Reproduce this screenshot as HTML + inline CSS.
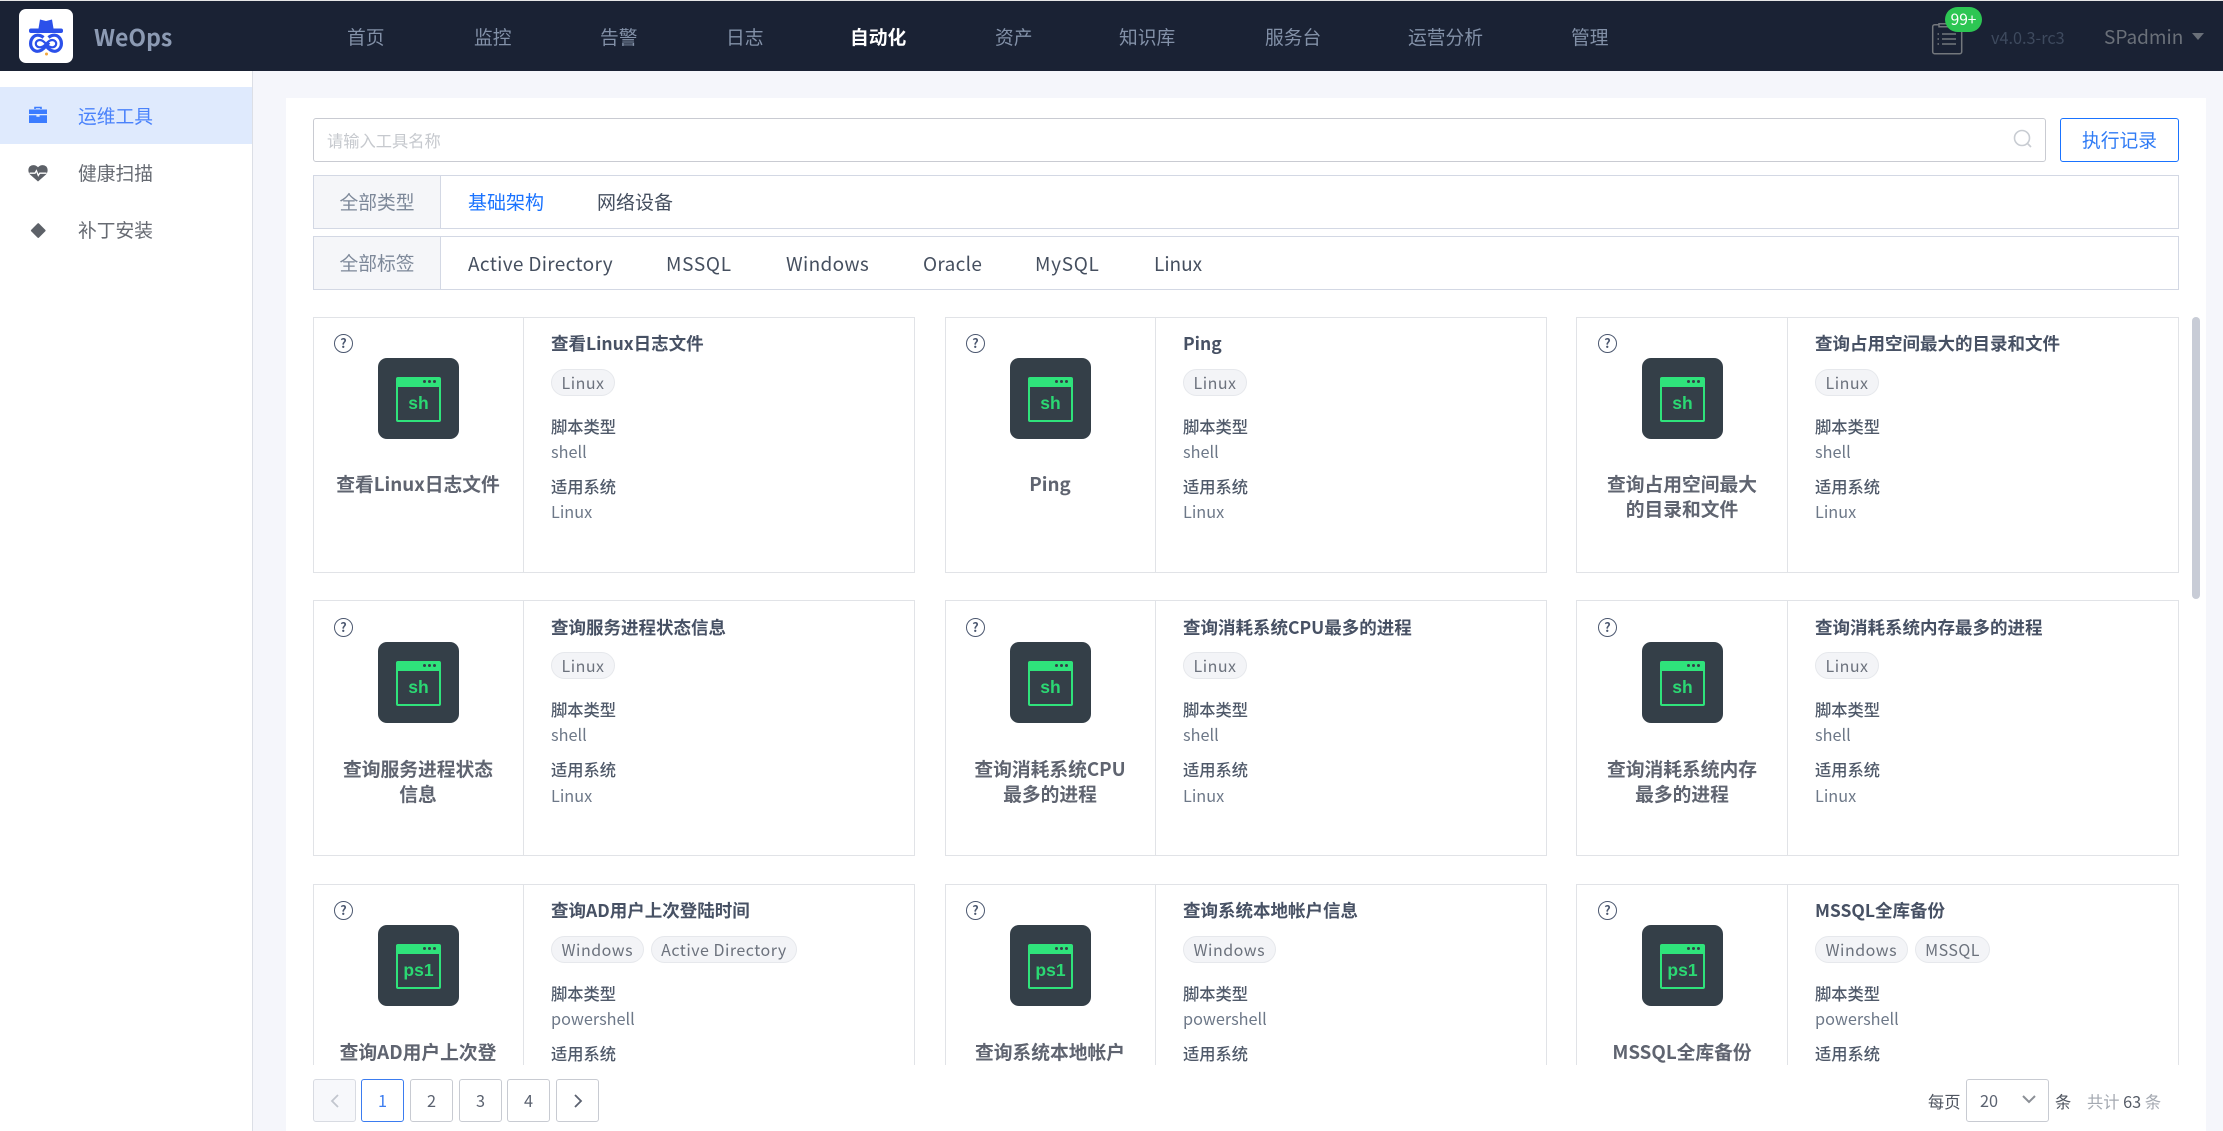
<!DOCTYPE html>
<html lang="zh"><head><meta charset="utf-8"><title>WeOps</title>
<style>
*{box-sizing:border-box;margin:0;padding:0}
html,body{width:2223px;height:1131px;overflow:hidden;background:#f5f6fb;font-family:"Noto Sans CJK SC","Liberation Sans",sans-serif}
.a{position:absolute;white-space:nowrap}
#top{position:absolute;left:0;top:0;width:2223px;height:71px;background:#1a2234;border-top:1px solid #e6e6e6}
.n{position:absolute;top:24px;line-height:24px;font-size:18.75px;color:#8391a8;white-space:nowrap}
#side{position:absolute;left:0;top:71px;width:253px;height:1060px;background:#fff;border-right:1px solid #dcdfe6}
#panel{position:absolute;left:286px;top:98px;width:1920px;height:1033px;background:#fff}
.row{position:absolute;left:313px;width:1866px;height:54px;border:1px solid #d3d8e4;background:#fff}
.lab{position:absolute;left:0;top:0;width:127px;height:52px;background:#f5f6f9;border-right:1px solid #d3d8e4;text-align:center;line-height:52px;font-size:18.75px;color:#7d8899}
.rt{position:absolute;line-height:24px;font-size:19px;color:#454f5f;white-space:nowrap}
.rl{letter-spacing:.33px}
.ru{letter-spacing:.7px}
#list{position:absolute;left:0;top:300px;width:2223px;height:765px;overflow:hidden}
.c{position:absolute;width:602px;height:256px;border:1px solid #e1e3e7;background:#fff}
.c3{width:603px}
.c3>*{transform:translateX(1px)}
.c .d{position:absolute;left:209px;top:0;width:1px;height:254px;background:#e1e3e7}
.c .q{position:absolute;left:20px;top:16px;width:19px;height:19px;border:1.5px solid #4c5870;border-radius:50%;font-size:12.5px;font-weight:700;line-height:16px;text-align:center;color:#4c5870}
.c .i{position:absolute;left:64px;top:40px;width:81px;height:81px;background:#343f48;border-radius:9px}
.c .w{position:absolute;left:18px;top:19px;width:45px;height:45px;border:2px solid #2fe37b;border-radius:2px;border-top-width:10px;text-align:center;font:700 17.5px/33px "Liberation Sans",sans-serif;color:#2bd873}
.c .w:before{content:"";position:absolute;right:3px;top:-7px;width:3px;height:3px;border-radius:50%;background:#343f48;box-shadow:-5px 0 #343f48,-10px 0 #343f48}
.c .l{position:absolute;left:-1px;top:154px;width:210px;text-align:center;font-size:18.75px;font-weight:700;line-height:25px;color:#5f6470}
.c .t{position:absolute;left:237px;top:14px;line-height:24px;font-size:17.5px;font-weight:700;color:#475164;white-space:nowrap}
.c .p{position:absolute;left:237px;top:51px;display:flex;gap:7px}
.c .p span{display:block;height:27px;line-height:24.5px;padding:0 9.5px;border:1px solid #e6e8ec;border-radius:14px;background:#f3f4f7;color:#6c727d;font-size:16px;letter-spacing:.5px;white-space:nowrap}
.c .k{position:absolute;left:237px;line-height:24px;font-size:16.25px;color:#4f5969;font-weight:500;white-space:nowrap}
.c .v{position:absolute;left:237px;line-height:24px;font-size:16.25px;color:#6d7888;white-space:nowrap}
.k1{top:96px}.v1{top:121px}.k2{top:155.5px}.v2{top:181px}
.r1 .l{margin-top:-1px}
.r2 .q,.r2 .i,.r2 .l,.r2 .t,.r2 .v2{margin-top:1px}
.b{position:absolute;top:1079px;width:43px;height:43px;border:1px solid #c8cbd2;border-radius:3px;background:#fff;text-align:center;line-height:40px;font-size:16.25px;color:#5b6270}
</style></head><body>
<div id="top">
<div class="a" style="left:19px;top:8px;width:54px;height:54px;background:#fff;border-radius:7px">
<svg width="54" height="54" viewBox="0 0 54 54"><path d="M19.5 19.5 21 10.5 27 12 33 10.500 34.500 19.500Z" fill="#2b50ea"/><rect x="10" y="19.500" width="34" height="4.500" rx="2" fill="#2b50ea"/><g fill="none" stroke="#2b50ea"><path stroke-width="3.200" d="M24.500 28.500C22.800 27 20.700 26.200 18.500 26.200 14.800 26.200 11.600 30 11.600 34.500 11.600 39 14.800 42.300 18.500 42.300 22 42.300 24.500 40 27 37L30 33.500M29.500 28.500C31.200 27 33.300 26.200 35.500 26.200 39.200 26.200 42.400 30 42.400 34.500 42.400 39 39.200 42.300 35.500 42.300 32 42.300 29.500 40 27 37"/><path stroke-width="2.200" d="M27 35C25 32.500 23 31 20.800 31 18.500 31 16.800 32.700 16.800 34.700 16.800 36.700 18.500 38.300 20.800 38.300 23 38.300 25 37 27 35 29 32.500 31 31 33.200 31 35.500 31 37.200 32.700 37.200 34.700 37.200 36.700 35.500 38.300 33.200 38.300 31 38.300 29 37 27 35"/></g><circle cx="27.500" cy="45" r="1.500" fill="#f2a63c"/></svg></div>
<div class="a" style="left:94px;top:19px;line-height:32px;font-size:23px;font-weight:700;color:#8c9ab3">WeOps</div>
<div class="n" style="left:347px">首页</div><div class="n" style="left:474px">监控</div><div class="n" style="left:600px">告警</div><div class="n" style="left:726px">日志</div>
<div class="n" style="left:850px;color:#fff;font-weight:700">自动化</div>
<div class="n" style="left:995px">资产</div><div class="n" style="left:1119px">知识库</div><div class="n" style="left:1265px">服务台</div><div class="n" style="left:1408px">运营分析</div><div class="n" style="left:1571px">管理</div>
<svg class="a" style="left:1930px;top:20px" width="36" height="36" viewBox="0 0 36 36" fill="none" stroke="#73777c" stroke-width="1.500"><rect x="2.700" y="3.700" width="29" height="29" rx="2"/><path d="M9 2.700h14v3H9z" fill="#1a2234"/><path d="M12 13h14M12 18h14M12 23h14"/><path d="M7.500 13h1.500M7.500 18h1.500M7.500 23h1.500"/></svg>
<div class="a" style="left:1945px;top:6px;width:37px;height:25px;border-radius:12.500px;background:#2dc653;color:#fff;text-align:center;font-size:15.500px;line-height:24px">99+</div>
<div class="a" style="left:1991px;top:24px;line-height:24px;font-size:16.250px;color:#3e4a5e">v4.0.3-rc3</div>
<div class="a" style="left:2104px;top:24px;line-height:24px;font-size:19px;color:#6a7079">SPadmin</div>
<div class="a" style="left:2192px;top:32px;width:0;height:0;border-left:6px solid transparent;border-right:6px solid transparent;border-top:7px solid #6a7079"></div>
</div>
<div id="side">
<div class="a" style="left:0;top:16px;width:252px;height:57px;background:#dfeafd"></div>
<svg class="a" style="left:29px;top:35px" width="18" height="18" viewBox="0 0 18 18"><path d="M6 3V1.500h6V3" fill="none" stroke="#3b7cff" stroke-width="1.600"/><path d="M0 3.500h18V8H0zM0 9.200h7.400v1.500h3.200V9.200H18V17H0z" fill="#3b7cff"/></svg>
<div class="a" style="left:78px;top:33px;line-height:24px;font-size:18.750px;color:#4a82fb">运维工具</div>
<svg class="a" style="left:28px;top:92px" width="20" height="20" viewBox="0 0 20 20"><path d="M10 18.500 2 11.500C-.2 9-.1 5.200 2 3.300 4.300 1.400 7.800 1.700 10 4.300 12.200 1.700 15.700 1.400 18 3.300 20.100 5.200 20.200 9 18 11.500Z" fill="#5d6168"/><path d="M1.500 10.200H7l1.400-2.500 1.900 4.800 1.500-2.300H18.500" fill="none" stroke="#fff" stroke-width="1.300"/></svg>
<div class="a" style="left:78px;top:90px;line-height:24px;font-size:18.750px;color:#666a72">健康扫描</div>
<div class="a" style="left:33px;top:154px;width:10.500px;height:10.500px;background:#5d6168;transform:rotate(45deg);border-radius:1px"></div>
<div class="a" style="left:78px;top:147px;line-height:24px;font-size:18.750px;color:#666a72">补丁安装</div>
</div>
<div id="panel"></div>
<div class="a" style="left:313px;top:118px;width:1733px;height:44px;border:1px solid #c9cbd2;border-radius:3px;background:#fff"></div>
<div class="a" style="left:327px;top:128px;line-height:24px;font-size:16.250px;color:#c6c9ce">请输入工具名称</div>
<svg class="a" style="left:2012px;top:128px" width="22" height="22" viewBox="0 0 22 22" fill="none" stroke="#c8ccd2" stroke-width="1.600"><circle cx="10" cy="10" r="7.500"/><path d="M15.500 15.500 19 19"/></svg>
<div class="a" style="left:2060px;top:118px;width:119px;height:44px;border:1px solid #1a73ff;border-radius:3px;background:#fff;text-align:center;line-height:42px;font-size:18.750px;color:#2f7bf5">执行记录</div>
<div class="row" style="top:175px"><div class="lab">全部类型</div></div>
<div class="row" style="top:236px"><div class="lab">全部标签</div></div>
<div class="rt" style="left:468px;top:190px;color:#1a73ff">基础架构</div>
<div class="rt" style="left:597px;top:190px">网络设备</div>
<div class="rt rl" style="left:468px;top:252px">Active Directory</div>
<div class="rt ru" style="left:666px;top:252px">MSSQL</div>
<div class="rt rl" style="left:786px;top:252px">Windows</div>
<div class="rt rl" style="left:923px;top:252px">Oracle</div>
<div class="rt ru" style="left:1035px;top:252px">MySQL</div>
<div class="rt" style="left:1154px;top:252px">Linux</div>
<div id="list">
<div class="c r1" style="left:313px;top:17px"><div class="d"></div><div class="q">?</div><div class="i"><div class="w">sh</div></div><div class="l">查看Linux日志文件</div><div class="t">查看Linux日志文件</div><div class="p"><span>Linux</span></div><div class="k k1">脚本类型</div><div class="v v1">shell</div><div class="k k2">适用系统</div><div class="v v2">Linux</div></div>
<div class="c r1" style="left:945px;top:17px"><div class="d"></div><div class="q">?</div><div class="i"><div class="w">sh</div></div><div class="l">Ping</div><div class="t">Ping</div><div class="p"><span>Linux</span></div><div class="k k1">脚本类型</div><div class="v v1">shell</div><div class="k k2">适用系统</div><div class="v v2">Linux</div></div>
<div class="c c3 r1" style="left:1576px;top:17px"><div class="d"></div><div class="q">?</div><div class="i"><div class="w">sh</div></div><div class="l">查询占用空间最大<br>的目录和文件</div><div class="t">查询占用空间最大的目录和文件</div><div class="p"><span>Linux</span></div><div class="k k1">脚本类型</div><div class="v v1">shell</div><div class="k k2">适用系统</div><div class="v v2">Linux</div></div>
<div class="c r2" style="left:313px;top:300px"><div class="d"></div><div class="q">?</div><div class="i"><div class="w">sh</div></div><div class="l">查询服务进程状态<br>信息</div><div class="t">查询服务进程状态信息</div><div class="p"><span>Linux</span></div><div class="k k1">脚本类型</div><div class="v v1">shell</div><div class="k k2">适用系统</div><div class="v v2">Linux</div></div>
<div class="c r2" style="left:945px;top:300px"><div class="d"></div><div class="q">?</div><div class="i"><div class="w">sh</div></div><div class="l">查询消耗系统CPU<br>最多的进程</div><div class="t">查询消耗系统CPU最多的进程</div><div class="p"><span>Linux</span></div><div class="k k1">脚本类型</div><div class="v v1">shell</div><div class="k k2">适用系统</div><div class="v v2">Linux</div></div>
<div class="c c3 r2" style="left:1576px;top:300px"><div class="d"></div><div class="q">?</div><div class="i"><div class="w">sh</div></div><div class="l">查询消耗系统内存<br>最多的进程</div><div class="t">查询消耗系统内存最多的进程</div><div class="p"><span>Linux</span></div><div class="k k1">脚本类型</div><div class="v v1">shell</div><div class="k k2">适用系统</div><div class="v v2">Linux</div></div>
<div class="c" style="left:313px;top:584px"><div class="d"></div><div class="q">?</div><div class="i"><div class="w">ps1</div></div><div class="l">查询AD用户上次登</div><div class="t">查询AD用户上次登陆时间</div><div class="p"><span>Windows</span><span>Active Directory</span></div><div class="k k1">脚本类型</div><div class="v v1">powershell</div><div class="k k2">适用系统</div><div class="v v2">Windows</div></div>
<div class="c" style="left:945px;top:584px"><div class="d"></div><div class="q">?</div><div class="i"><div class="w">ps1</div></div><div class="l">查询系统本地帐户</div><div class="t">查询系统本地帐户信息</div><div class="p"><span>Windows</span></div><div class="k k1">脚本类型</div><div class="v v1">powershell</div><div class="k k2">适用系统</div><div class="v v2">Windows</div></div>
<div class="c c3" style="left:1576px;top:584px"><div class="d"></div><div class="q">?</div><div class="i"><div class="w">ps1</div></div><div class="l">MSSQL全库备份</div><div class="t">MSSQL全库备份</div><div class="p"><span>Windows</span><span>MSSQL</span></div><div class="k k1">脚本类型</div><div class="v v1">powershell</div><div class="k k2">适用系统</div><div class="v v2">Windows</div></div>
</div>
<div class="a" style="left:2192px;top:317px;width:8px;height:282px;border-radius:4px;background:#c8ccd6"></div>
<div class="b" style="left:313px;background:#f7f8fb;border-color:#d8dbe2"><svg width="12" height="16" viewBox="0 0 12 16" style="margin-top:13px" fill="none" stroke="#c2c6ce" stroke-width="1.800"><path d="M9 2 3 8l6 6"/></svg></div>
<div class="b" style="left:361px;border-color:#3b7cf0;color:#3b7cf0">1</div>
<div class="b" style="left:410px">2</div><div class="b" style="left:459px">3</div><div class="b" style="left:507px">4</div>
<div class="b" style="left:556px"><svg width="12" height="16" viewBox="0 0 12 16" style="margin-top:13px" fill="none" stroke="#5b6270" stroke-width="1.800"><path d="M3 2l6 6-6 6"/></svg></div>
<div class="a" style="left:1928px;top:1089px;line-height:24px;font-size:16.250px;color:#4f5560">每页</div>
<div class="a" style="left:1966px;top:1079px;width:83px;height:43px;border:1px solid #c8cbd2;border-radius:3px;background:#fff"></div>
<div class="a" style="left:1980px;top:1088px;line-height:24px;font-size:16.250px;color:#5b6270">20</div>
<svg class="a" style="left:2021px;top:1093px" width="16" height="12" viewBox="0 0 16 12" fill="none" stroke="#8b8f96" stroke-width="2"><path d="M2 3l6 6 6-6"/></svg>
<div class="a" style="left:2055px;top:1089px;line-height:24px;font-size:16.250px;color:#4f5560">条</div>
<div class="a" style="left:2087px;top:1089px;line-height:24px;font-size:16.250px;color:#a4a9b1">共计 <span style="color:#555b66">63</span> 条</div>
</body></html>
